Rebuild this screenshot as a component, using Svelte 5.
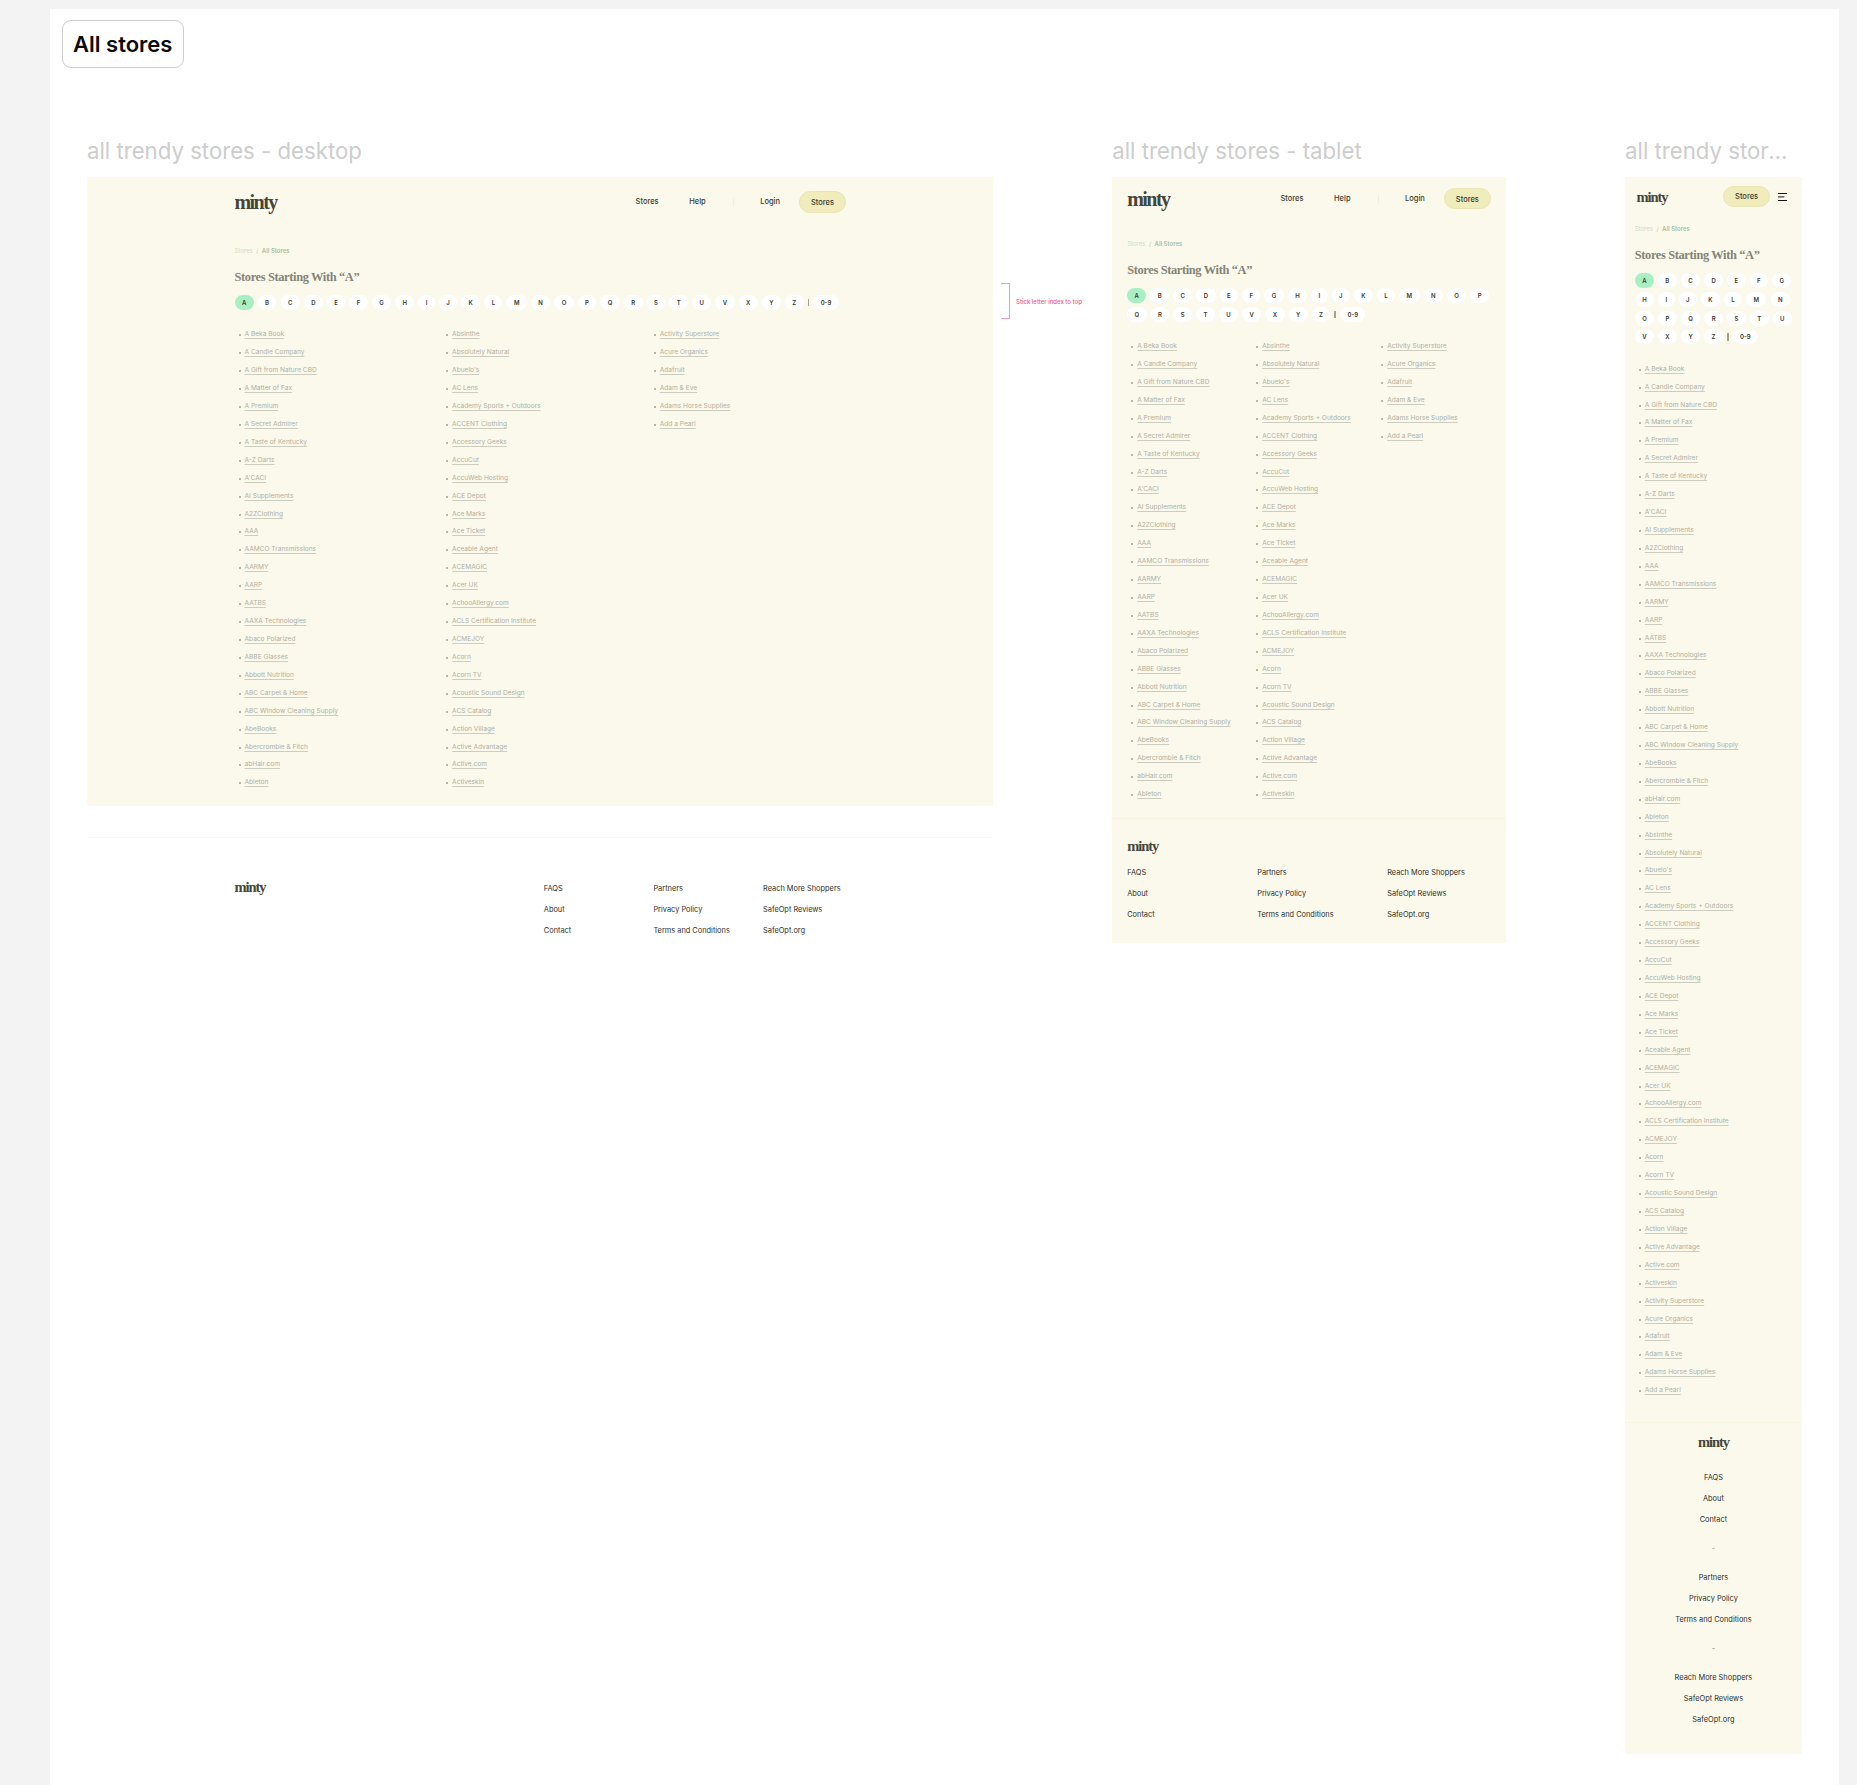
<script>
  const letters = ['A','B','C','D','E','F','G','H','I','J','K','L','M','N','O','P','Q','R','S','T','U','V','X','Y','Z'];
  const col1 = ['A Beka Book','A Candle Company','A Gift from Nature CBD','A Matter of Fax','A Premium','A Secret Admirer','A Taste of Kentucky','A-Z Darts',"A'CACI",'AI Supplements','A2ZClothing','AAA','AAMCO Transmissions','AARMY','AARP','AATBS','AAXA Technologies','Abaco Polarized','ABBE Glasses','Abbott Nutrition','ABC Carpet & Home','ABC Window Cleaning Supply','AbeBooks','Abercrombie & Fitch','abHair.com','Ableton'];
  const col2 = ['Absinthe','Absolutely Natural',"Abuelo's",'AC Lens','Academy Sports + Outdoors','ACCENT Clothing','Accessory Geeks','AccuCut','AccuWeb Hosting','ACE Depot','Ace Marks','Ace Ticket','Aceable Agent','ACEMAGIC','Acer UK','AchooAllergy.com','ACLS Certification Institute','ACMEJOY','Acorn','Acorn TV','Acoustic Sound Design','ACS Catalog','Action Village','Active Advantage','Active.com','Activeskin'];
  const col3 = ['Activity Superstore','Acure Organics','Adafruit','Adam & Eve','Adams Horse Supplies','Add a Pearl'];
  const footer = [['FAQS','About','Contact'],['Partners','Privacy Policy','Terms and Conditions'],['Reach More Shoppers','SafeOpt Reviews','SafeOpt.org']];
</script>

{#snippet crumbs()}
  <p class="crumbs"><span>Stores</span><i>/</i><b>All Stores</b></p>
  <h1>Stores Starting With “A”</h1>
  <div class="index">
    {#each letters as l, i}
      <span class="pill" class:on={i === 0}>{l}</span>
    {/each}
    <span class="bar"></span>
    <span class="pill">0-9</span>
  </div>
{/snippet}

{#snippet column(items)}
  <ul>
    {#each items as s}
      <li><a href="#top">{s}</a></li>
    {/each}
  </ul>
{/snippet}

{#snippet links()}
  <nav class="menu">
    <span>Stores</span>
    <span class="help">Help</span>
    <em></em>
    <span>Login</span>
    <span class="cta">Stores</span>
  </nav>
{/snippet}

<main class="panel">
  <div class="badge">All stores</div>

  <div class="board">
    <section class="col desk">
      <h2>all trendy stores - desktop</h2>
      <div class="frame">
        <header class="top"><span class="logo">minty</span>{@render links()}</header>
        {@render crumbs()}
        <div class="lists">
          {@render column(col1)}
          {@render column(col2)}
          {@render column(col3)}
        </div>
      </div>
      <aside class="note"><span class="brace"></span><span class="notetext">Stick letter index to top</span></aside>
      <footer class="f-desk">
        <span class="logo small">minty</span>
        <div class="f-cols">
          {#each footer as group}
            <div>{#each group as f}<p>{f}</p>{/each}</div>
          {/each}
        </div>
      </footer>
    </section>

    <section class="col tab">
      <h2>all trendy stores - tablet</h2>
      <div class="frame">
        <header class="top"><span class="logo">minty</span>{@render links()}</header>
        {@render crumbs()}
        <div class="lists">
          {@render column(col1)}
          {@render column(col2)}
          {@render column(col3)}
        </div>
        <footer class="f-tab">
          <span class="logo small">minty</span>
          <div class="f-cols">
            {#each footer as group}
              <div>{#each group as f}<p>{f}</p>{/each}</div>
            {/each}
          </div>
        </footer>
      </div>
    </section>

    <section class="col mob">
      <h2>all trendy stores - mobile</h2>
      <div class="frame">
        <header class="top">
          <span class="logo mlogo">minty</span>
          <span class="right">
            <span class="cta">Stores</span>
            <svg class="burger" viewBox="0 0 9 8" width="9" height="8" aria-hidden="true">
              <path d="M0 .5H9M0 3.9H6.3M0 7.5H9" stroke="#111" stroke-width="1" fill="none"/>
            </svg>
          </span>
        </header>
        {@render crumbs()}
        <div class="lists">
          {@render column([...col1, ...col2, ...col3])}
        </div>
        <footer class="f-mob">
          <span class="logo small">minty</span>
          {#each footer as group, i}
            {#if i > 0}<p class="dash">-</p>{/if}
            <div>{#each group as f}<p>{f}</p>{/each}</div>
          {/each}
        </footer>
      </div>
    </section>
  </div>
</main>

<style>
  :global(body) {
    margin: 0;
    background: #f3f3f3;
    font-family: Inter, "Liberation Sans", sans-serif;
  }
  .panel {
    box-sizing: border-box;
    margin: 9px 18px 0 50px;
    padding: 11px 0 0 12px;
    height: 1776px;
    background: #fff;
    overflow: hidden;
  }
  .badge {
    box-sizing: border-box;
    width: 121.5px;
    height: 48px;
    border: 1px solid #cfcfcf;
    border-radius: 9px;
    font-size: 22px;
    font-weight: 600;
    line-height: 46px;
    text-align: center;
    color: #0c0c0c;
    background: #fff;
  }
  .board {
    display: flex;
    align-items: flex-start;
    gap: 119.2px;
    margin: 69px 0 0 25px;
  }
  .col { position: relative; flex: none; }
  .desk { width: 906px; }
  .tab { width: 393.7px; }
  .mob { width: 176.7px; }
  h2 {
    margin: 0 0 13px;
    font-size: 22.2px;
    font-weight: 400;
    line-height: 27px;
    height: 27px;
    color: #cdcdcd;
    white-space: nowrap;
    overflow: hidden;
    text-overflow: ellipsis;
  }
  .mob h2 { width: 164px; }
  .frame { background: #fbf9ec; box-sizing: border-box; }

  .top { display: flex; justify-content: space-between; align-items: center; }
  .logo {
    font-family: "Liberation Serif", serif;
    font-size: 20px;
    font-weight: 700;
    letter-spacing: -1.55px;
    line-height: 16px;
    color: #45453a;
    display: block;
  }
  .logo.small { font-size: 14.5px; letter-spacing: -1.05px; }
  .mlogo { font-size: 14.5px; margin-left: 1.7px; letter-spacing: -1.05px; }
  .menu { display: flex; align-items: center; font-size: 7.5px; font-weight: 500; color: #3a3a2e; }
  .menu span { line-height: 21.4px; }
  .help { margin: 0 27.5px 0 30.5px; }
  .menu em { width: 1px; height: 8px; background: #f2f0dd; margin-right: 26px; }
  .cta {
    box-sizing: border-box;
    display: block;
    width: 47px;
    height: 21.4px;
    margin-left: 19px;
    border: 1px solid #e9e5b4;
    border-radius: 11px;
    background: #f0ecbc;
    font-size: 7.5px;
    font-weight: 500;
    line-height: 19.4px;
    text-align: center;
    color: #3a3a2e;
  }
  .right { display: flex; align-items: center; gap: 7.7px; margin-right: 5.3px; }
  .right .cta { margin: 0; }
  .burger { display: block; }

  .crumbs { margin: 1px 0 -1px; font-size: 6px; line-height: 10px; color: #cfdac8; display: flex; }
  .crumbs i { font-style: normal; margin: 0 3.5px; color: #b9c4b0; }
  .crumbs b { font-weight: 600; color: #a8c0a8; }
  h1 {
    margin: 14px 0 10px;
    font-family: "Liberation Serif", serif;
    font-size: 12.4px;
    font-weight: 700;
    letter-spacing: -0.35px;
    line-height: 16px;
    color: #848476;
  }
  .index { display: flex; flex-wrap: wrap; align-items: center; gap: 3.8px 4.05px; margin-right: -3px; }
  .pill {
    height: 15px;
    min-width: 16px;
    padding: 0 7.4px;
    box-sizing: border-box;
    border-radius: 8px;
    background: #fff;
    font-size: 6px;
    font-weight: 600;
    line-height: 15px;
    text-align: center;
    color: #3a3a2e;
  }
  .pill.on { background: #a8f0c4; }
  .bar { width: 1.6px; height: 7.5px; background: #a3a294; }

  .lists { display: flex; margin-top: 16.3px; }
  ul { list-style: none; margin: 0; padding: 0; flex: none; }
  li {
    position: relative;
    height: 17.93px;
    line-height: 17.93px;
    padding-left: 10px;
    font-size: 6.6px;
    white-space: nowrap;
  }
  li::before {
    content: "";
    position: absolute;
    left: 4px;
    top: 8px;
    width: 2px;
    height: 2px;
    border-radius: 50%;
    background: #a0a092;
  }
  a {
    color: #b0b0a2;
    text-decoration: underline;
    text-decoration-color: #cdcdbf;
    text-decoration-thickness: 0.7px;
    text-underline-offset: 1.5px;
  }

  .desk .frame { padding: 14.3px 147px 14.5px 147.5px; height: 629px; }
  .desk .lists ul { width: 207.6px; }
  .desk .crumbs { margin-top: 33.3px; }
  .note { position: absolute; left: 914px; top: 146px; display: flex; align-items: center; gap: 6px; }
  .brace { width: 8px; height: 34px; border: solid #f39cc0; border-width: 1px 1px 1px 0; }
  .notetext { font-size: 6px; font-weight: 500; color: #ee5a94; white-space: nowrap; }

  .f-desk {
    margin-top: 30.5px;
    padding: 41px 0 0 147.5px;
    border-top: 1px solid #fbf9ec;
    position: relative;
  }
  .f-desk .f-cols { position: absolute; left: 456.8px; top: 40.5px; display: flex; }
  .f-desk .f-cols > div { width: 109.6px; flex: none; }
  .f-cols p, .f-mob p { margin: 0; font-size: 7.4px; line-height: 21.2px; color: #2f2f2a; white-space: nowrap; }

  .tab .frame { padding: 11px 15px 0; height: 765.7px; }
  .tab .top { height: 21.4px; }
  .tab .crumbs { margin-top: 29.6px; }
  .tab .lists ul { width: 125px; }
  .f-tab {
    margin: 13.8px -15px 0;
    padding: 19px 15px 0;
    border-top: 1px solid #f7f5df;
  }
  .f-tab .f-cols { display: flex; margin-top: 8px; }
  .f-tab .f-cols > div { width: 130px; flex: none; }

  .mob .frame { padding: 9px 9.7px 0; height: 1577px; }
  .mob .crumbs { margin-top: 16.6px; }
  .f-mob {
    margin: 21.8px -9.7px 0;
    padding-top: 10.8px;
    border-top: 1px solid #f7f5df;
    text-align: center;
  }
  .f-mob .logo { margin-bottom: 17px; }
  .f-mob p { line-height: 21.3px; }
  .f-mob p.dash { line-height: 36px; color: #8a8a80; }
</style>
